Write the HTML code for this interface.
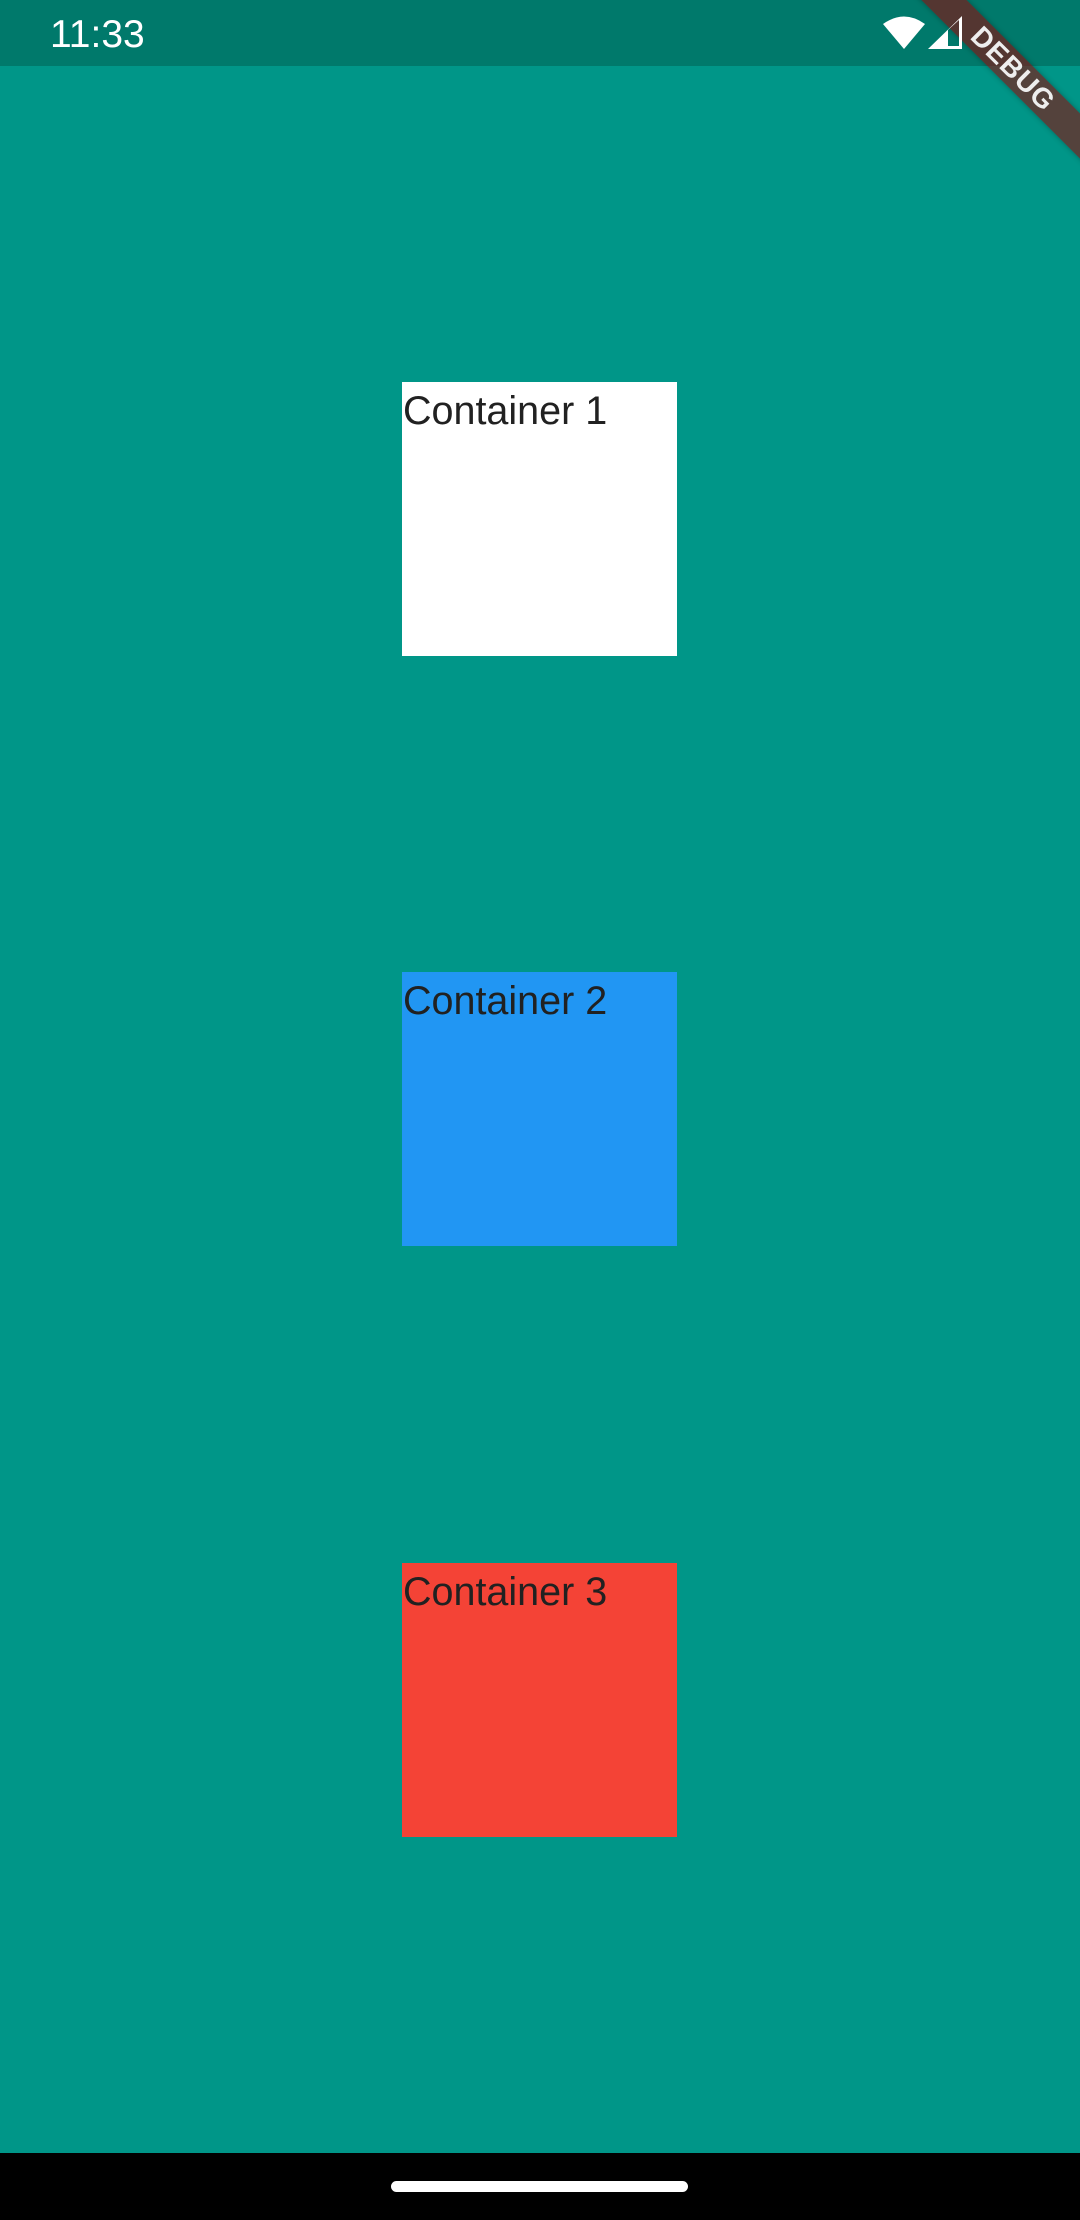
<!DOCTYPE html>
<html><head><style>
html,body{margin:0;padding:0;}
body{width:1080px;height:2220px;background:#009688;position:relative;overflow:hidden;font-family:"Liberation Sans",sans-serif;}
.sb{position:absolute;left:0;top:0;width:1080px;height:66px;background:#00796b;}
.time{position:absolute;left:50px;top:13px;font-size:39px;color:#fff;}
.box{position:absolute;left:402px;width:275px;height:274px;}
.box span{position:absolute;left:1px;top:7px;font-size:39.5px;color:#212121;}
.nav{position:absolute;left:0;top:2153px;width:1080px;height:67px;background:#000;}
.pill{position:absolute;left:391px;top:2181px;width:297px;height:11px;border-radius:6px;background:#fff;}
.banner{position:absolute;width:400px;height:32px;background:rgba(140,10,10,0.6);color:#eee;font-weight:bold;font-size:28px;text-align:center;line-height:32px;left:813px;top:53px;transform:rotate(45deg);transform-origin:center;letter-spacing:1px;box-shadow:0 0 6px rgba(0,0,0,0.3);}
.ic{position:absolute;z-index:5;}
</style></head><body>
<div class="sb"><div class="time">11:33</div></div>
<div class="banner">DEBUG</div>
<svg class="ic" style="left:883px;top:15px" width="42" height="35" viewBox="0 0 42 35"><path d="M0 9 Q21 -6 42 9 L21 34 Z" fill="#fff"/></svg>
<svg class="ic" style="left:928px;top:16px" width="35" height="34" viewBox="0 0 35 34"><path fill-rule="evenodd" d="M34 0 L34 33 L0 33 Z M20 14 L31 4 L31 30 L20 30 Z" fill="#fff"/></svg>
<div class="box" style="top:382px;background:#fff"><span>Container 1</span></div>
<div class="box" style="top:972px;background:#2196f3"><span>Container 2</span></div>
<div class="box" style="top:1563px;background:#f44336"><span>Container 3</span></div>
<div class="nav"></div><div class="pill"></div>
</body></html>
